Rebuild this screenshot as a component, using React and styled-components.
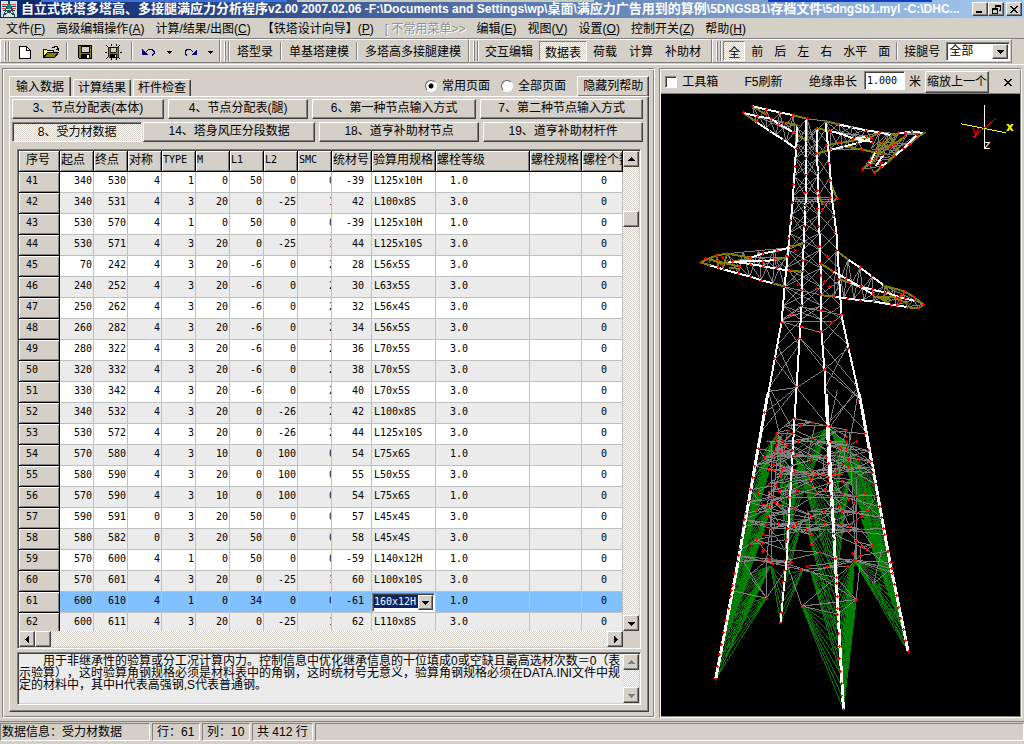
import React from 'react'
import styled, { createGlobalStyle, css } from 'styled-components'

// Styles
const face = '#d4d0c8'

const GlobalStyle = createGlobalStyle`
  * {
    box-sizing: border-box;
  }
  body {
    margin: 0;
    background: ${face};
    color: #000;
    text-spacing-trim: space-all;
  }
  body, button, input, select, textarea {
    font-family: 'Liberation Sans', 'Noto Sans CJK SC', sans-serif;
    font-size: 12px;
    line-height: 14px;
  }
`

const raised = css`
  border: 1px solid;
  border-color: #fff #404040 #404040 #fff;
  box-shadow: inset -1px -1px #808080;
`

const sunken = css`
  border: 1px solid;
  border-color: #808080 #fff #fff #808080;
  box-shadow: inset 1px 1px #404040;
`

const dither = css`
  background: conic-gradient(#fff 25%, ${face} 0 50%, #fff 0 75%, ${face} 0) 0 0 / 2px 2px;
`

const mono = css`
  font-family: 'DejaVu Sans Mono', monospace;
  font-size: 10px;
`

const Window = styled.div`
  display: flex;
  flex-direction: column;
  height: 100vh;
  overflow: hidden;
  background: ${face};
`

const TitleBar = styled.header`
  display: flex;
  align-items: center;
  height: 18px;
  padding: 0 2px 0 1px;
  background:
    linear-gradient(90deg, transparent 4%, #3a72dc 4% 28%, transparent 28% 29%, #c4ccc0 29% 58%, transparent 58% 75%, #0f3fc0 75% 91%, transparent 91%) 0 0 / 100% 2px no-repeat,
    linear-gradient(90deg, #0a246a, #a6caf0);
`

const Title = styled.h1`
  flex: 1;
  margin: 0 0 0 4px;
  overflow: hidden;
  color: #fff;
  font-size: 12px;
  line-height: 16px;
  white-space: nowrap;
`

const Zh = styled.span`
  font-size: 13px;
`

const WindowButtons = styled.div`
  display: flex;
  gap: ${p => p.$gap || 0}px;
`

const WindowButton = styled.button`
  ${raised}
  display: grid;
  place-items: center;
  width: 16px;
  height: 14px;
  padding: 0;
  background: ${face};
`

const MenuBar = styled.nav`
  display: flex;
  align-items: center;
  height: 20px;
  padding: 2px 6px 0;
  gap: 11px;
`

const MenuItem = styled.button`
  padding: 0;
  border: 0;
  background: none;
  white-space: nowrap;
  color: ${p => p.disabled ? '#909090' : '#000'};
  text-shadow: ${p => p.disabled ? '1px 1px #fff' : 'none'};
`

const Toolbars = styled.div`
  display: flex;
  height: 26px;
  border-top: 1px solid #808080;
`

const Toolbar = styled.div`
  display: flex;
  align-items: center;
  height: 24px;
  padding: 0 ${p => p.$end === undefined ? 4 : p.$end}px 0 3px;
  gap: ${p => p.$gap || 0}px;
  border: 1px solid;
  border-color: #fff #808080 #808080 #fff;
`

const Grip = styled.span`
  flex: none;
  width: 6px;
  height: 20px;
  margin-right: ${p => p.$after || 0}px;
  border: 1px solid #fff;
  border-width: 0 1px;
  box-shadow: inset -1px 0 #808080, inset 1px 0 #808080;
`

const Separator = styled.span`
  width: 2px;
  height: 18px;
  border-left: 1px solid #808080;
  border-right: 1px solid #fff;
`

const ToolButton = styled.button`
  display: flex;
  align-items: center;
  justify-content: center;
  height: 20px;
  padding: 2px ${p => p.$pad === undefined ? 5 : p.$pad}px 0;
  border: 1px solid transparent;
  background: none;
  white-space: nowrap;
  ${p => p.$pressed && css`
    ${dither}
    border-color: #808080 #fff #fff #808080;
    padding-top: 3px;
  `}
`

const Combo = styled.span`
  ${sunken}
  display: flex;
  width: ${p => p.$width}px;
  height: 19px;
  padding: 1px;
  background: #fff;
`

const ComboSelect = styled.select`
  flex: 1;
  min-width: 0;
  padding: 0 0 0 1px;
  border: 0;
  outline: 0;
  appearance: none;
  background: #fff;
  color: #000;
  ${p => p.$active && css`
    ${mono}
    height: 13px;
    padding: 0;
    background: #0a246a;
    color: #fff;
    line-height: 13px;
    text-overflow: clip;
  `}
`

const ComboArrow = styled.span`
  ${raised}
  display: grid;
  place-items: center;
  width: ${p => p.$narrow ? 15 : 16}px;
  background: ${face};
`

const Workspace = styled.main`
  display: grid;
  flex: 1;
  grid-template-columns: minmax(0, 9fr) minmax(0, 5fr);
  gap: 4px;
  min-height: 0;
  padding: 3px 2px;
  border-top: 1px solid #fff;
`

const Pane = styled.section`
  display: flex;
  flex-direction: column;
  min-height: 0;
  border: 1px solid;
  border-color: #808080 #fff #fff #808080;
  box-shadow: inset 1px 1px #fff, inset -1px -1px #808080;
  padding: ${p => p.$flush ? '1px' : '7px 5px 5px 6px'};
`

const TabRow = styled.div`
  display: flex;
  align-items: flex-end;
  height: 20px;
  gap: 2px;
`

const Tab = styled.button`
  height: ${p => p.$active ? 20 : 17}px;
  padding: 0 ${p => p.$active ? 6 : 4}px;
  border: 1px solid;
  border-color: #fff #404040 transparent #fff;
  border-bottom: 0;
  border-radius: 2px 2px 0 0;
  box-shadow: inset -1px 0 #808080;
  background: ${face};
  white-space: nowrap;
`

const TabOptions = styled.div`
  display: flex;
  align-items: center;
  align-self: stretch;
  margin: 0 0 0 auto;
  gap: 11px;
`

const RadioLabel = styled.label`
  display: flex;
  align-items: center;
  gap: 5px;
  height: 16px;
  white-space: nowrap;
`

const Radio = styled.input`
  appearance: none;
  width: 12px;
  height: 12px;
  margin: 0;
  border: 1px solid;
  border-color: #606060 #fff #fff #606060;
  border-radius: 50%;
  background: ${p => p.checked ? 'radial-gradient(circle, #000 2px, #fff 3px)' : '#fff'};
`

const PushButton = styled.button`
  ${raised}
  height: 21px;
  padding: 0 5px;
  background: ${face};
  white-space: nowrap;
`

const TabPage = styled.div`
  display: flex;
  flex: 1;
  flex-direction: column;
  min-height: 0;
  padding: 2px 5px 6px 2px;
  border: 1px solid;
  border-color: #fff #404040 #404040 #fff;
  box-shadow: inset -1px -1px #808080;
`

const PageRow = styled.div`
  display: grid;
  grid-template-columns: ${p => p.$columns};
  gap: 4px;
  margin-bottom: 3px;
`

const PageButton = styled.button`
  ${raised}
  height: 20px;
  padding: 0 0 2px;
  background: ${face};
  white-space: nowrap;
  ${p => p.$pressed && css`
    ${dither}
    ${sunken}
    margin-right: -3px;
    padding: 0;
  `}
`

const GridFrame = styled.div`
  ${sunken}
  display: grid;
  flex: 1;
  grid-template-columns: minmax(0, 1fr) 16px;
  grid-template-rows: minmax(0, 1fr) 16px;
  min-height: 0;
  margin: 4px 2px 3px 5px;
  padding: 1px;
`

const GridView = styled.div`
  overflow: hidden;
  background: #fff;
`

const Table = styled.table`
  width: 100%;
  table-layout: fixed;
  border-collapse: separate;
  border-spacing: 0;
`

const HeadCell = styled.th`
  height: 21px;
  padding: 0 0 2px ${p => p.$first ? 7 : 1}px;
  overflow: hidden;
  border-right: 1px solid #000;
  border-bottom: 1px solid #000;
  background: ${face};
  box-shadow: inset 1px 1px #fff, inset -1px -1px #808080;
  font-weight: normal;
  text-align: left;
  white-space: nowrap;
  ${p => p.$latin && mono}
`

const RowHead = styled.th`
  ${mono}
  height: 21px;
  padding: 0 0 2px 7px;
  border-right: 1px solid #000;
  border-bottom: 1px solid #000;
  background: ${face};
  box-shadow: inset 1px 1px #fff, inset -1px -1px #808080;
  font-weight: normal;
  line-height: 14px;
  text-align: left;
`

const Row = styled.tr`
  background: ${p => p.$current ? '#80c0ff' : p.$odd ? '#fff' : '#ebebeb'};
`

const Cell = styled.td`
  ${mono}
  height: 21px;
  padding: ${p => p.$pad};
  overflow: hidden;
  border-right: 1px solid #c0c0c0;
  border-bottom: 1px solid #c0c0c0;
  line-height: 14px;
  text-align: ${p => p.$align};
  white-space: nowrap;
`

const Track = styled.div`
  ${dither}
  display: flex;
  flex-direction: ${p => p.$vertical ? 'column' : 'row'};
  justify-content: space-between;
`

const Thumb = styled.button`
  ${raised}
  display: grid;
  place-items: center;
  width: 16px;
  height: 16px;
  padding: 0;
  background: ${face};
`

const Spacer = styled.span`
  flex: ${p => p.$grow};
`

const HelpFrame = styled.div`
  ${sunken}
  display: grid;
  grid-template-columns: minmax(0, 1fr) 16px;
  height: 53px;
  margin: 0 2px 0 5px;
  padding: 1px;
`

const HelpText = styled.textarea`
  padding: 1px 0 0;
  overflow: hidden;
  border: 0;
  outline: 0;
  resize: none;
  background: #ebebeb;
  line-height: 12px;
  white-space: pre;
`

const ViewTools = styled.div`
  display: flex;
  align-items: center;
  height: 24px;
  padding-left: 4px;
  border-bottom: 1px solid #808080;
  white-space: nowrap;
`

const CheckLabel = styled.label`
  display: flex;
  align-items: center;
  gap: 5px;
`

const Check = styled.input`
  ${sunken}
  appearance: none;
  width: 12px;
  height: 12px;
  margin: 0;
  background: #fff;
`

const RefreshButton = styled.button`
  margin: 0 auto;
  padding: 0;
  border: 0;
  background: none;
`

const LengthInput = styled.input`
  ${sunken}
  ${mono}
  width: 41px;
  height: 19px;
  margin: 0 4px 2px 7px;
  padding: 0 2px;
  background: #fff;
`

const ZoomButton = styled.button`
  ${raised}
  height: 22px;
  margin-left: 4px;
  padding: 0 1px;
  background: ${face};
`

const CloseButton = styled.button`
  width: 31px;
  padding: 0 0 0 7px;
  border: 0;
  background: none;
`

const Scene = styled.svg`
  display: block;
  flex: 1;
  width: 100%;
  min-height: 0;
  background: #000;
  shape-rendering: crispEdges;
`

const StatusBar = styled.footer`
  display: flex;
  align-items: flex-start;
  height: 23px;
  padding-top: 1px;
  gap: 2px;
  border-top: 1px solid #808080;
`

const StatusCell = styled.span`
  flex: ${p => p.$grow ? 1 : 'none'};
  min-width: ${p => p.$width || 0}px;
  height: 18px;
  padding: 1px 4px 1px ${p => p.$first ? 1 : 4}px;
  border: 1px solid;
  border-color: #808080 #fff #fff #808080;
  white-space: nowrap;
`

// Data
const menus = [
  ['文件', 'F'], ['高级编辑操作', 'A'], ['计算/结果/出图', 'C'], ['【铁塔设计向导】', 'P'],
  ['[ 不常用菜单>>', null], ['编辑', 'E'], ['视图', 'V'], ['设置', 'O'], ['控制开关', 'Z'], ['帮助', 'H']
]

const columns = [
  { name: '起点', width: 34 },
  { name: '终点', width: 34 },
  { name: '对称', width: 34 },
  { name: 'TYPE', width: 34, latin: true },
  { name: 'M', width: 34, latin: true },
  { name: 'L1', width: 34, latin: true },
  { name: 'L2', width: 34, latin: true },
  { name: 'SMC', width: 34, latin: true, align: 'left', pad: '0 0 2px 31px' },
  { name: '统材号', width: 40, pad: '0 7px 2px 0' },
  { name: '验算用规格', width: 64, align: 'left', pad: '0 0 2px 2px' },
  { name: '螺栓等级', width: 94, align: 'left', pad: '0 0 2px 14px' },
  { name: '螺栓规格', width: 52 },
  { name: '螺栓个数', align: 'left', pad: '0 0 2px 19px' }
]

const records = `
41 340 530 4 1 0 50 0 0 -39 L125x10H 1.0
42 340 531 4 3 20 0 -25 1 42 L100x8S 3.0
43 530 570 4 1 0 50 0 0 -39 L125x10H 1.0
44 530 571 4 3 20 0 -25 1 44 L125x10S 3.0
45 70 242 4 3 20 -6 0 2 28 L56x5S 3.0
46 240 252 4 3 20 -6 0 2 30 L63x5S 3.0
47 250 262 4 3 20 -6 0 2 32 L56x4S 3.0
48 260 282 4 3 20 -6 0 2 34 L56x5S 3.0
49 280 322 4 3 20 -6 0 2 36 L70x5S 3.0
50 320 332 4 3 20 -6 0 2 38 L70x5S 3.0
51 330 342 4 3 20 -6 0 2 40 L70x5S 3.0
52 340 532 4 3 20 0 -26 2 42 L100x8S 3.0
53 530 572 4 3 20 0 -26 2 44 L125x10S 3.0
54 570 580 4 3 10 0 100 0 54 L75x6S 1.0
55 580 590 4 3 20 0 100 0 55 L50x5S 3.0
56 570 590 4 3 10 0 100 0 54 L75x6S 1.0
57 590 591 0 3 20 50 0 0 57 L45x4S 3.0
58 580 582 0 3 20 50 0 0 58 L45x4S 3.0
59 570 600 4 1 0 50 0 0 -59 L140x12H 1.0
60 570 601 4 3 20 0 -25 1 60 L100x10S 3.0
61 600 610 4 1 0 34 0 0 -61 160x12H 1.0
62 600 611 4 3 20 0 -25 1 62 L110x8S 3.0
`.trim().split('\n').map(line => line.split(' '))

const helpText = `\u3000\u3000用于非继承性的验算或分工况计算内力。控制信息中优化继承信息的十位填成0或空缺且最高选材次数＝0（表
示验算），这时验算角钢规格必须是材料表中的角钢，这时统材号无意义，验算角钢规格必须在DATA.INI文件中规
定的材料中，其中H代表高强钢,S代表普通钢。`

// Tower model. Parts are traced on a grid of thirds of a unit from their own origin.
const head = {
  origin: [690, 95],
  white: [
    '188,32 230,42 271,51 310,59', '160,52 203,63 245,70 268,86 310,110', '199,79 240,107 281,133 320,160',
    '448,87 487,96 530,105 571,111 607,120', '422,107 460,117 492,130 550,140', '422,164 465,153 505,143 545,130',
    '490,131 535,124', '628,114 668,108 703,113', '560,167 540,208', '575,214 596,200',
    '616,182 645,158 683,120', '583,178 560,212'
  ],
  olive: [
    '188,32 230,58', '160,52 199,79', '310,59 353,70', '310,110 353,137', '285,81 325,90', '407,77 448,87',
    '380,98 422,107', '382,174 422,164', '412,149 470,140 545,125 571,111', '465,153 520,163 560,172 595,176',
    '607,120 629,114 703,113 683,128 660,147 616,182', '520,222 560,190 580,150 608,120',
    '555,233 596,200 616,182', '580,150 607,152 645,125', '575,176 620,130', '545,190 575,140',
    '600,120 625,160 610,185', '420,255 443,310 430,320', '383,285 400,330'
  ],
  lattice: [
    [188, 32, 353, 70, 199, 79, 320, 160, 4], [203, 63, 325, 90, 203, 63, 310, 110, 3],
    [353, 70, 408, 77, 353, 137, 382, 174, 1], [408, 77, 571, 111, 422, 107, 545, 130, 4],
    [422, 107, 530, 122, 422, 164, 520, 163, 3], [571, 111, 683, 118, 545, 160, 616, 182, 4],
    [580, 140, 520, 222, 661, 146, 555, 233, 4]
  ],
  nodes: '188,32 160,52 230,42 271,51 310,59 353,70 203,63 230,58 199,79 245,70 240,107 268,86 283,81 281,133 310,110 325,90 320,160 353,137 349,188 380,98 407,77 448,87 422,107 487,96 530,105 571,111 412,149 422,164 382,174 451,140 463,152 492,130 505,143 532,124 550,142 520,163 545,130 560,167 580,140 580,176 607,120 607,154 616,146 628,112 645,123 647,110 667,107 683,118 683,128 703,113 661,146 643,160 616,182 596,176 596,200 575,214 575,202 560,190 540,196 540,208 520,223 555,233 317,214 311,268 349,239 383,230 416,203 422,255 383,285 387,300 347,292 443,310 325,308 308,323 424,308 405,323'
}

const arms = {
  origin: [690, 200],
  white: [
    '182,173 220,161 262,152 300,143', '112,185 220,184 258,180', '60,196 100,208 146,221 182,230 214,241 251,250',
    '125,185 182,192 220,199 260,206 300,212', '475,178 512,203 548,230 584,257',
    '430,214 470,236 512,260 552,270 590,278 632,292 675,303', '434,290 473,296 512,301 553,305 605,314 655,322',
    '480,248 515,262 550,283'
  ],
  olive: [
    '32,187 80,166 112,161 182,173', '32,187 60,196', '112,161 98,208', '58,176 98,193 125,185', '47,176 150,200',
    '80,170 86,200', '125,185 182,176', '118,205 148,206', '300,140 343,132', '258,180 293,172', '300,212 341,216',
    '251,250 284,260', '440,152 475,178', '392,190 430,214', '392,286 434,290',
    '584,257 647,275 676,293 703,314 688,326 655,322', '552,290 632,292', '584,257 610,290 655,312',
    '605,300 570,292 600,312', '448,238 480,248', '647,275 632,305'
  ],
  lattice: [
    [112, 161, 300, 143, 146, 221, 284, 260, 4], [182, 173, 293, 172, 182, 193, 300, 212, 3],
    [440, 152, 584, 257, 434, 290, 553, 305, 4], [584, 257, 703, 314, 553, 305, 688, 326, 4]
  ],
  nodes: '308,8 347,16 347,28 406,8 421,10 385,26 400,29 431,46 302,62 344,79 388,79 436,97 296,115 302,140 343,130 391,139 316,152 440,152 415,170 340,181 293,170 256,179 262,152 220,161 220,184 220,199 260,206 298,212 341,215 392,190 430,214 475,178 512,203 548,230 584,257 394,227 353,233 311,239 325,253 380,265 421,260 406,244 448,239 470,236 480,248 512,260 517,260 550,268 551,283 587,278 647,275 676,293 703,314 688,326 655,322 655,310 623,292 632,290 635,283 647,295 635,305 623,316 605,314 553,305 512,301 473,296 434,290 392,284 337,271 284,260 251,250 214,241 182,230 146,221 100,208 86,203 58,196 32,187 47,176 58,184 80,167 112,161 98,172 85,181 98,194 112,185 127,184 148,200 182,173 182,193 337,317 397,332 305,343 275,367 334,379 427,367 394,394 457,343 328,415 254,476 478,445 404,509 319,560'
}

const body = {
  origin: [700, 390],
  nodes: '194,70 176,178 165,230 157,265 151,301 145,338 136,374 133,391 130,409 124,446 118,482 115,500 112,517 284,87 280,133 278,182 275,229 271,277 268,325 265,373 263,418 260,452 257,482 255,515 388,223 391,281 394,320 397,355 401,434 403,452 407,508 478,31 497,133 508,184 515,217 517,235 520,250 527,284 532,320 541,352 547,385 553,418 557,437 565,487 575,520 579,538 257,109 265,122 302,109 337,98 347,109 380,109 390,111 230,131 247,137 203,155 230,151 415,125 442,122 442,140 298,157 347,157 337,146 394,157 230,169 250,157 260,169 275,167 385,167 451,169 470,155 442,157 223,184 227,187 242,187 253,184 280,200 289,194 325,200 334,212 371,200 382,205 407,191 415,199 424,175 442,179 451,191 448,211 409,211 194,205 223,203 208,239 221,226 221,244 242,257 250,239 253,271 286,247 337,244 334,269 325,257 347,257 373,257 388,265 401,257 412,244 421,257 430,226 430,275 448,233 463,271 463,289 478,209 208,284 230,289 175,311 208,308 217,323 238,305 247,320 263,308 292,305 337,292 350,308 376,301 403,308 430,314 437,325 463,319 470,320 497,313 190,347 203,331 203,355 227,341 238,347 208,352 170,365 283,358 325,367 334,379 337,388 376,367 391,337 421,352 430,367 446,331 466,340 503,365 470,370 485,382 203,382 200,406 227,404 238,404 211,418 281,412 290,404 295,427 322,421 376,404 379,421 409,404 424,406 437,421 446,424 451,412 457,403 470,394 485,421 190,437 215,440 169,452 151,466 190,463 334,437 334,465 364,490 470,457 485,472 503,482 520,470 458,494 482,500 208,512 221,512 190,485 188,515 221,523 274,520 322,532 385,532 433,518 463,518 469,514 446,532'
}

const feet = {
  origin: [700, 550],
  gray: [
    '200,148 95,125', '200,148 148,79', '200,148 201,20', '200,148 265,53', '200,148 120,20', '148,79 206,31',
    '307,172 410,86', '307,172 415,196', '307,172 470,152', '307,172 265,53', '307,172 414,160',
    '470,152 410,86', '470,152 415,196', '470,152 485,20', '470,152 335,68', '523,103 465,35', '523,103 577,58',
    '523,103 548,0', '118,20 265,53 335,68 469,35 577,58', '187,34 302,62 445,52', '410,86 302,62',
    '410,86 469,35', '115,20 220,44 364,10', '469,35 574,40', '465,35 577,70', '335,68 220,31'
  ],
  nodes: '118,2 115,20 112,38 103,73 97,110 95,125 92,142 85,178 77,214 70,250 64,286 58,318 53,354 47,391 257,2 253,65 250,98 247,128 247,157 245,190 241,220 407,28 410,86 410,103 413,142 413,178 415,196 415,217 418,254 421,293 421,328 424,368 427,404 427,442 431,482 568,6 574,40 577,58 580,74 586,106 592,139 598,176 604,208 613,242 619,274 627,308 148,79 200,148 307,172 470,152 523,103 187,8 187,34 206,31 223,31 220,44 265,53 275,41 302,62 322,52 335,68 364,10 385,52 445,52 433,38 458,14 465,35 469,35 482,19 503,2'
}

const legs = [
  [[798, 125], [793, 203], [785, 287], [782, 322], [769, 392], [737, 570], [716, 680]],
  [[807, 118], [806, 202], [803, 272], [802, 307], [800, 338], [797, 388], [795, 419], [787, 560], [781, 623]],
  [[817, 128], [819, 202], [821, 263], [822, 333], [825, 370], [829, 463], [836, 565], [844, 711]],
  [[826, 122], [829, 150], [833, 202], [837, 233], [842, 315], [849, 348], [859, 392], [891, 565], [909, 653]]
]

// apex x, apex y, leg, from y, to y, count
const fans = [
  [777, 435, 0, 466, 600, 15], [775, 500, 0, 530, 640, 14], [771, 567, 0, 580, 680, 17], [767, 599, 0, 609, 680, 7],
  [770, 470, 0, 500, 600, 12], [765, 530, 0, 545, 650, 14], [750, 577, 0, 585, 650, 7],
  [777, 435, 1, 450, 560, 9], [771, 567, 1, 580, 623, 5], [803, 572, 1, 575, 623, 6], [803, 520, 1, 520, 590, 7],
  [830, 428, 1, 445, 530, 12], [800, 465, 1, 480, 560, 7],
  [830, 428, 3, 470, 590, 17], [850, 480, 3, 500, 620, 15], [855, 562, 3, 570, 653, 12],
  [874, 584, 3, 590, 653, 6], [862, 520, 3, 530, 640, 14], [850, 450, 3, 480, 560, 9],
  [795, 455, 2, 500, 590, 11], [811, 572, 2, 585, 680, 9], [802, 607, 2, 620, 711, 9], [805, 520, 2, 530, 650, 9],
  [857, 600, 2, 610, 711, 12], [855, 562, 2, 585, 711, 15], [850, 480, 2, 500, 580, 10], [845, 440, 2, 450, 530, 8]
]

const parse = list => list.split(' ').map(pair => pair.split(',').map(Number))

const legX = (leg, y) => {
  const points = legs[leg]
  const i = Math.max(1, points.findIndex(p => p[1] >= y))
  const [x0, y0] = points[i - 1]
  const [x1, y1] = points[i]
  return x0 + (x1 - x0) * (y - y0) / (y1 - y0)
}

const latticePath = ([ax, ay, bx, by, cx, cy, dx, dy, n]) => {
  let d = ''
  for (let i = 0; i < n; i++) {
    const t = i / n
    const u = (i + 1) / n
    const a = [ax + (bx - ax) * t, ay + (by - ay) * t]
    const b = [ax + (bx - ax) * u, ay + (by - ay) * u]
    const c = [cx + (dx - cx) * t, cy + (dy - cy) * t]
    const e = [cx + (dx - cx) * u, cy + (dy - cy) * u]
    d += `M${a}L${c}M${a}L${e}M${c}L${b}M${a}L${b}M${c}L${e}`
  }
  return d
}

const bracePath = (left, right, levels) => levels.slice(1).map((y, i) => {
  const top = levels[i]
  return `M${legX(left, top)},${top}L${legX(right, y)},${y}M${legX(right, top)},${top}L${legX(left, y)},${y}`
}).join('')

const fanPath = ([x, y, leg, from, to, count]) => {
  let d = ''
  for (let i = 0; i < count; i++) {
    const end = from + (to - from) * i / (count - 1)
    d += `M${x},${y}L${legX(leg, end)},${end}`
  }
  return d
}

const meshPath = list => {
  const nodes = parse(list)
  let d = ''
  nodes.forEach(([x, y], i) => {
    nodes.slice(i + 1).forEach(([u, v], k) => {
      const dx = Math.abs(u - x)
      const dy = Math.abs(v - y)
      const near = dx < 130 && dy < 75 && (i * 7 + k * 13) % 17 === 0
      const level = dx < 110 && dy < 16 && (i + k) % 4 === 0
      if (near || level) d += `M${x},${y}L${u},${v}`
    })
  })
  return d
}

const markerPath = list => parse(list).map(([x, y]) => `M${x - 4} ${y}h9M${x} ${y - 4}v9`).join('')

const place = part => `translate(${part.origin}) scale(0.3333)`

const upperLevels = [128, 143, 158, 176, 196, 215, 233, 250, 268, 287, 306, 320]
const lowerLevels = [320, 345, 388, 432]

const Tower = () => (
  <Scene viewBox='661 94 360 623' role='img' aria-label='铁塔三维模型'>
    <g fill='none' stroke='#808080'>
      {[[0, 1], [1, 2], [2, 3], [0, 2]].map(([a, b]) => (
        <path key={`${a}${b}`} d={bracePath(a, b, upperLevels)} />
      ))}
      {[[0, 1], [2, 3]].map(([a, b]) => (
        <path key={`${a}${b}`} d={bracePath(a, b, lowerLevels)} />
      ))}
      <path d='M793 199H833M795 201H832M796 197H830M785 287L821 295L841 280M782 322L822 333L842 315L802 307ZM782 322L832 322M775 359L800 338L825 370L849 348M797 388L825 370L861 400M769 392L797 388M775 359L797 388M764 414L797 388L830 428M769 392L780 435M859 392L849 450M859 392L830 422M800 338L861 400M838 390L830 425' />
    </g>
    <g fill='none' stroke='#008000'>
      {fans.map((fan, i) => <path key={i} d={fanPath(fan)} />)}
    </g>
    <g transform={place(body)} fill='none' stroke='#808080' strokeWidth='3'>
      <path d={meshPath(body.nodes)} />
      <path d='M215 155V520M240 140L200 520M450 130L470 520M470 270V520M284 87L390 111L442 122M230 131L284 87M165 230L280 200L415 199L515 217M145 338L268 325L437 325L541 352M133 391L211 418L446 424L557 437M200 406H460M230 257H430' />
    </g>
    <g transform={place(feet)} fill='none' stroke='#808080' strokeWidth='3'>
      {feet.gray.map(points => <polyline key={points} points={points} />)}
    </g>
    {[head, arms].map(part => (
      <g key={part.nodes} transform={place(part)} fill='none' strokeWidth='3'>
        {part.lattice.map((item, i) => <path key={i} d={latticePath(item)} stroke='#808080' />)}
        {part.olive.map(points => <polyline key={points} points={points} stroke='#808000' strokeWidth='6' />)}
        {part.white.map(points => <polyline key={points} points={points} stroke='#fff' strokeWidth='6' />)}
      </g>
    ))}
    <g fill='none' stroke='#fff' strokeWidth='2'>
      {legs.map((points, i) => <polyline key={i} points={points.join(' ')} />)}
      <path d='M768 395L737 570L716 680M827 395L836 565L844 711M860 395L891 565L909 653' strokeWidth='3' />
    </g>
    {[head, arms, body, feet].map(part => (
      <path key={part.nodes} transform={place(part)} d={markerPath(part.nodes)} stroke='#f00' strokeWidth='3' />
    ))}
    <g fontFamily='DejaVu Sans' fontSize='12'>
      <path d='M985.500 105V149' stroke='#fff' />
      <path d='M962 123.500L1007 132.500' stroke='#ff0' />
      <path d='M974 137L997 118' stroke='#f00' />
      <text x='1007' y='131' fill='#ff0' fontWeight='bold'>x</text>
      <text x='973' y='135' fill='#f00'>y</text>
      <text x='985' y='149' fill='#fff'>z</text>
    </g>
  </Scene>
)

const Arrow = ({ dir = 'down', color = '#000' }) => {
  const shapes = {
    down: 'M0 2h7v1h-1v1h-1v1h-1v1h-1v-1h-1v-1h-1v-1h-1z',
    up: 'M3 1h1v1h1v1h1v1h1v1h-7v-1h1v-1h1v-1h1z',
    left: 'M1 3h1v-1h1v-1h1v-1h1v7h-1v-1h-1v-1h-1v-1h-1z',
    right: 'M2 0h1v1h1v1h1v1h1v1h-1v1h-1v1h-1v1h-1z'
  }
  return (
    <svg width='7' height='7' shapeRendering='crispEdges'>
      <path d={shapes[dir]} fill={color} />
    </svg>
  )
}

const Caret = () => (
  <svg width='5' height='3' shapeRendering='crispEdges'><path d='M0 0h5v1h-1v1h-1v1h-1v-1h-1v-1h-1z' /></svg>
)

const Cross = () => (
  <svg width='8' height='7' shapeRendering='crispEdges'>
    <path d='M0 0h2v1h1v1h2v-1h1v-1h2v1h-1v1h-1v1h-1v1h1v1h1v1h1v1h-2v-1h-1v-1h-2v1h-1v1h-2v-1h1v-1h1v-1h1v-1h-1v-1h-1v-1h-1z' />
  </svg>
)

const TowerLogo = () => (
  <svg width='16' height='16' shapeRendering='crispEdges'>
    <rect width='16' height='16' fill='#d8e4e4' />
    <path d='M1 3.500h5M10 3.500h5M1 7.500h4M11 7.500h4' stroke='#e04040' />
    <path d='M1 5.500h14M2 9.500h12M8 0L5 8L2 16M8 0L11 8L14 16M5 9L13 14M11 9L3 14M6 5L11 9' fill='none' stroke='#204850' />
    <path d='M6 3h4v5h-4z' fill='#188' />
  </svg>
)

const NewIcon = () => (
  <svg width='12' height='13' shapeRendering='crispEdges'>
    <path d='M.5.5h7l4 4v8h-11z' fill='#fff' stroke='#000' />
    <path d='M7.500.500v4h4' fill='none' stroke='#000' />
  </svg>
)

const OpenIcon = () => (
  <svg width='17' height='14' shapeRendering='crispEdges'>
    <path d='M.5 12.500v-8h3l1 1h6v2' fill='#ffff80' stroke='#000' />
    <path d='M.5 12.500l4-5h11l-4 5z' fill='#808000' stroke='#000' />
    <path d='M9 2.500h2l1-1h2l1 2v2M12.500 4.500h3' fill='none' stroke='#000' />
  </svg>
)

const disk = (
  <g>
    <path d='M.5.5h13v13h-12l-1-1z' fill='#808000' stroke='#000' />
    <path d='M3 1h8v6h-8z' fill={face} stroke='#000' />
    <path d='M3 9h9v5h-9z' />
    <path d='M9 10h2v3h-2z' fill='#fff' />
  </g>
)

const SaveIcon = () => <svg width='14' height='14' shapeRendering='crispEdges'>{disk}</svg>

const SaveAllIcon = () => (
  <svg width='17' height='16' shapeRendering='crispEdges'>
    <g transform='translate(3 3) scale(0.75)'>{disk}</g>
    <path d='M0 8h2M15 8h2M1 1l2 2M15 1l-2 2M1 15l2-2M15 15l-2-2M6 0v2M11 0v2M6 14v2M11 14v2' stroke='#000' />
  </svg>
)

const UndoIcon = ({ flip }) => (
  <svg width='13' height='8' shapeRendering='crispEdges'>
    <g transform={flip ? 'translate(13 0) scale(-1 1)' : undefined} fill='none' stroke='#00007f'>
      <path d='M4 3.500L7 1.500h3l2 2v2l-2 2' />
      <path d='M0 1v6h6z' fill='#00007f' stroke='none' />
    </g>
  </svg>
)

const ScrollButton = ({ dir, color, label }) => (
  <Thumb aria-label={label}><Arrow dir={dir} color={color} /></Thumb>
)

const SpecCombo = ({ value }) => (
  <Combo $width={63}>
    <ComboSelect $active aria-label='验算用规格' defaultValue={value}>
      <option>{value}</option>
    </ComboSelect>
    <ComboArrow $narrow><Arrow /></ComboArrow>
  </Combo>
)

const DataTable = () => (
  <Table>
    <colgroup>
      <col width='41' />
      {columns.map(column => <col key={column.name} width={column.width} />)}
    </colgroup>
    <thead>
      <tr>
        <HeadCell $first>序号</HeadCell>
        {columns.map(column => (
          <HeadCell key={column.name} $latin={column.latin}>{column.name}</HeadCell>
        ))}
      </tr>
    </thead>
    <tbody>
      {records.map(([id, ...values]) => {
        const current = id === '61'
        const cells = [...values, '', '0']
        return (
          <Row key={id} $current={current} $odd={id % 2 === 1}>
            <RowHead scope='row'>{id}</RowHead>
            {columns.map((column, i) => {
              const combo = current && i === 9
              return (
                <Cell
                  key={column.name}
                  $align={column.align || 'right'}
                  $pad={combo ? '0' : column.pad || '0 1px 2px 0'}
                >
                  {combo ? <SpecCombo value={cells[i]} /> : cells[i]}
                </Cell>
              )
            })}
          </Row>
        )
      })}
    </tbody>
  </Table>
)

const InputPane = () => (
  <Pane>
    <TabRow>
      <Tab $active>输入数据</Tab>
      <Tab>计算结果</Tab>
      <Tab>杆件检查</Tab>
      <TabOptions>
        <RadioLabel><Radio type='radio' name='pages' checked readOnly />常用页面</RadioLabel>
        <RadioLabel><Radio type='radio' name='pages' checked={false} readOnly />全部页面</RadioLabel>
        <PushButton>隐藏列帮助</PushButton>
      </TabOptions>
    </TabRow>
    <TabPage>
      <PageRow $columns='153fr 141fr 165fr 164fr'>
        <PageButton>3、节点分配表(本体)</PageButton>
        <PageButton>4、节点分配表(腿)</PageButton>
        <PageButton>6、第一种节点输入方式</PageButton>
        <PageButton>7、第二种节点输入方式</PageButton>
      </PageRow>
      <PageRow $columns='128fr 173fr 161fr 161fr'>
        <PageButton $pressed>8、受力材数据</PageButton>
        <PageButton>14、塔身风压分段数据</PageButton>
        <PageButton>18、道亨补助材节点</PageButton>
        <PageButton>19、道亨补助材杆件</PageButton>
      </PageRow>
      <GridFrame>
        <GridView><DataTable /></GridView>
        <Track $vertical>
          <ScrollButton dir='up' label='向上' />
          <Spacer $grow={11} />
          <Thumb aria-label='滚动' />
          <Spacer $grow={97} />
          <ScrollButton dir='down' label='向下' />
        </Track>
        <Track>
          <ScrollButton dir='left' label='向左' />
          <Thumb aria-label='滚动' />
          <Spacer $grow={1} />
          <ScrollButton dir='right' label='向右' />
        </Track>
      </GridFrame>
      <HelpFrame>
        <HelpText aria-label='列帮助' readOnly value={helpText} />
        <Track $vertical>
          <ScrollButton dir='up' color='#808080' label='向上' />
          <ScrollButton dir='down' color='#808080' label='向下' />
        </Track>
      </HelpFrame>
    </TabPage>
  </Pane>
)

const ModelPane = () => (
  <Pane $flush>
    <ViewTools>
      <CheckLabel><Check type='checkbox' />工具箱</CheckLabel>
      <RefreshButton>F5刷新</RefreshButton>
      <label htmlFor='length'>绝缘串长</label>
      <LengthInput id='length' defaultValue='1.000' />
      米
      <ZoomButton>缩放上一个</ZoomButton>
      <CloseButton aria-label='关闭'><Cross /></CloseButton>
    </ViewTools>
    <Tower />
  </Pane>
)

const App = () => (
  <Window>
    <GlobalStyle />
    <TitleBar>
      <TowerLogo />
      <Title>
        <Zh>自立式铁塔多塔高、多接腿满应力分析程序</Zh>v2.00 2007.02.06 -F:\Documents and Settings\wp\
        <Zh>桌面</Zh>\<Zh>满应力广告用到的算例</Zh>\5DNGSB1\<Zh>存档文件</Zh>\5dngSb1.myl -C:\DHC...
      </Title>
      <WindowButtons $gap={2}>
        <WindowButtons>
          <WindowButton aria-label='最小化'>
            <svg width='8' height='8' shapeRendering='crispEdges'><path d='M0 6h6v2h-6z' /></svg>
          </WindowButton>
          <WindowButton aria-label='还原'>
            <svg width='9' height='9' shapeRendering='crispEdges'>
              <path d='M3 0h6v6h-2v-1h1v-3h-4v1h-1zM0 3h6v6h-6zM1 5v3h4v-3z' fillRule='evenodd' />
            </svg>
          </WindowButton>
        </WindowButtons>
        <WindowButton aria-label='关闭'><Cross /></WindowButton>
      </WindowButtons>
    </TitleBar>
    <MenuBar>
      {menus.map(([name, key]) => (
        <MenuItem key={name} disabled={!key}>{name}{key && <>(<u>{key}</u>)</>}</MenuItem>
      ))}
    </MenuBar>
    <Toolbars>
      <Toolbar>
        <Grip $after={3} />
        <ToolButton aria-label='新建'><NewIcon /></ToolButton>
        <ToolButton aria-label='打开'><OpenIcon /></ToolButton>
        <Separator />
        <ToolButton $pad={9} aria-label='保存'><SaveIcon /></ToolButton>
        <ToolButton $pad={2} aria-label='全部保存'><SaveAllIcon /></ToolButton>
        <Spacer $grow='0 0 6px' />
        <Separator />
        <ToolButton $pad={8} aria-label='撤销'><UndoIcon /></ToolButton>
        <ToolButton $pad={2} aria-label='撤销列表'><Caret /></ToolButton>
        <ToolButton $pad={8} aria-label='重做'><UndoIcon flip /></ToolButton>
        <ToolButton $pad={1} aria-label='重做列表'><Caret /></ToolButton>
      </Toolbar>
      <Toolbar $gap={3} $end={3}>
        <Grip />
        <ToolButton $pad={3}>塔型录</ToolButton>
        <Separator />
        <ToolButton $pad={3}>单基塔建模</ToolButton>
        <Separator />
        <ToolButton $pad={3}>多塔高多接腿建模</ToolButton>
      </Toolbar>
      <Toolbar>
        <Grip />
        <ToolButton>交互编辑</ToolButton>
        <ToolButton $pressed>数据表</ToolButton>
        <ToolButton>荷载</ToolButton>
        <ToolButton>计算</ToolButton>
        <ToolButton>补助材</ToolButton>
      </Toolbar>
      <Toolbar $gap={1} $end={1}>
        <Grip />
        <ToolButton $pad={4} $pressed>全</ToolButton>
        <ToolButton $pad={4}>前</ToolButton>
        <ToolButton $pad={4}>后</ToolButton>
        <ToolButton $pad={4}>左</ToolButton>
        <ToolButton $pad={4}>右</ToolButton>
        <ToolButton $pad={4}>水平</ToolButton>
        <ToolButton $pad={4}>面</ToolButton>
        <Separator />
        <ToolButton $pad={4} as='label' htmlFor='leg'>接腿号</ToolButton>
        <Combo $width={64}>
          <ComboSelect id='leg'><option>全部</option></ComboSelect>
          <ComboArrow><Arrow /></ComboArrow>
        </Combo>
      </Toolbar>
    </Toolbars>
    <Workspace>
      <InputPane />
      <ModelPane />
    </Workspace>
    <StatusBar>
      <StatusCell $first $width={150}>数据信息：受力材数据</StatusCell>
      <StatusCell $width={48}>行：61</StatusCell>
      <StatusCell $width={48}>列：10</StatusCell>
      <StatusCell $width={57}>共 412 行</StatusCell>
      <StatusCell $grow />
    </StatusBar>
  </Window>
)

export default App
